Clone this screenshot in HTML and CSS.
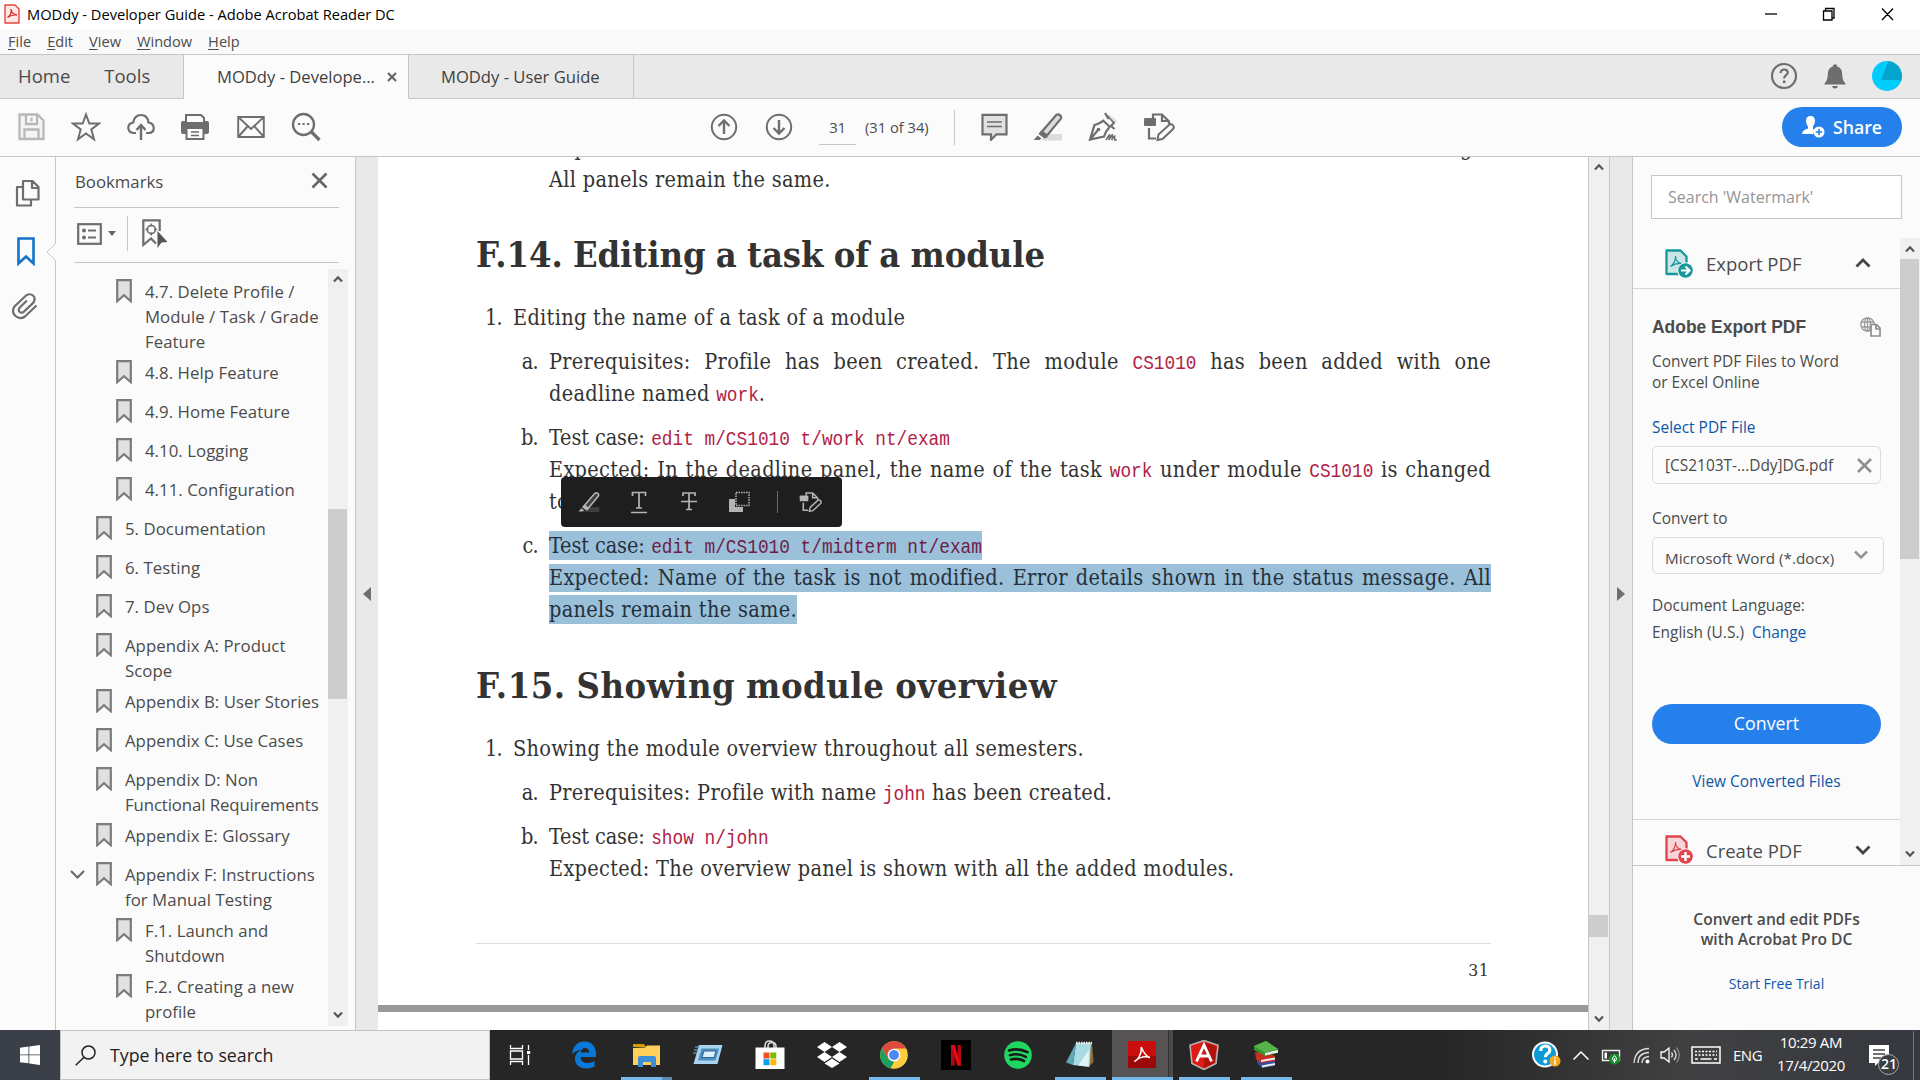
FILE: index.html
```html
<!DOCTYPE html>
<html lang="en">
<head>
<meta charset="utf-8">
<title>MODdy - Developer Guide - Adobe Acrobat Reader DC</title>
<link rel="stylesheet" href="styles.css">
</head>
<body>
<svg class="defs" width="0" height="0" aria-hidden="true">
  <symbol id="bm" viewBox="0 0 16 24"><path d="M1.2 1.2h13.6v21L8 16.2l-6.800 6z" fill="#e1e1e1" stroke="#7b7b7b" stroke-width="2.2"/></symbol>
  <symbol id="up" viewBox="0 0 10 8"><path d="M1 6.500L5 2.300l4 4.200" fill="none" stroke="#555" stroke-width="2.200"/></symbol>
  <symbol id="down" viewBox="0 0 10 8"><path d="M1 1.500L5 5.700l4-4.200" fill="none" stroke="#555" stroke-width="2.200"/></symbol>
  <symbol id="pdf" viewBox="0 0 28 29"><path d="M1.500 1.500h14l6 6v17.500h-20z" fill="currentColor" fill-opacity=".2" stroke="currentColor" stroke-width="2.300" stroke-linejoin="round"/><path d="M5.500 17.500c2.500-1.500 5.500-6 5-10.500 0 4.500 3 7 6.500 7.500-4-.3-8 .5-11.500 3z" fill="none" stroke="currentColor" stroke-width="1.200"/><circle cx="20.500" cy="21.500" r="8.300" fill="#fbfbfb"/><circle cx="20.500" cy="21.500" r="7.300" fill="currentColor"/></symbol>
  <symbol id="edit" viewBox="0 0 32 30"><path d="M10 6V2.500h9l7 7V12M19 2.500V9h7M6 16v10.500h7" fill="none" stroke="currentColor" stroke-width="2.200"/><rect x="1" y="6" width="12" height="8" rx="1" fill="currentColor"/><path d="M14.500 28l1-5.500L26.500 12.500q2-1 3.500.8t.3 3.500L19.500 27z" fill="none" stroke="currentColor" stroke-width="2"/></symbol>
  <symbol id="marker" viewBox="0 0 30 30"><path d="M8 28.500L15 22h14v6.500z" fill="currentColor" opacity=".22"/><path d="M9 19.500L23 3.200q2-1.700 4 0t.5 4L14 23.500z" fill="currentColor" fill-opacity=".22" stroke="currentColor" stroke-width="2.200"/><path d="M7.500 19l7.500 6-3.500 1.500-6-4.500zM4.500 23.500l4 3-2 1.500H.8z" fill="currentColor"/></symbol>
</svg>

<header class="titlebar">
  <svg class="app-icon" viewBox="0 0 16 20"><path d="M1 1h10l4 4v14H1z" fill="#ffe9e7" stroke="#e8433d" stroke-width="1.400" stroke-linejoin="round"/><path d="M3.500 13.500c2.500-1.500 4-5 3.500-8.500.5 4 3 5.500 6 6-4-.3-6.500.5-9.500 2.500z" fill="none" stroke="#d9312b" stroke-width="1.300"/></svg>
  <span class="title">MODdy - Developer Guide - Adobe Acrobat Reader DC</span>
  <svg class="win-buttons" viewBox="0 0 132 16"><path d="M1 8h12" stroke="#000" stroke-width="1.300"/><path d="M59.500 5h8.500v9h-8.500zM61.500 5V2.500H70V12h-2M118 2.500l11 11.500M129 2.500L118 14" fill="none" stroke="#000" stroke-width="1.300"/></svg>
</header>
<nav class="menubar"><span><u>F</u>ile</span><span><u>E</u>dit</span><span><u>V</u>iew</span><span><u>W</u>indow</span><span><u>H</u>elp</span></nav>

<div class="tabs">
  <div class="home-tabs"><span class="home">Home</span><span>Tools</span></div>
  <div class="tab active"><span>MODdy - Develope...</span><svg width="10" height="10" viewBox="0 0 10 10"><path d="M1 1l8 8M9 1L1 9" stroke="#666" stroke-width="2.200"/></svg></div>
  <div class="tab"><span>MODdy - User Guide</span></div>
  <div class="account">
    <svg width="28" height="28" viewBox="0 0 28 28"><circle cx="14" cy="14" r="12" fill="none" stroke="#6e6e6e" stroke-width="2.200"/><path d="M10.700 11q0-3.500 3.500-3.500t3.500 3q0 1.500-1.600 2.600T14.200 16v.5" fill="none" stroke="#6e6e6e" stroke-width="2.200"/><circle cx="14.200" cy="19.800" r="1.500" fill="#6e6e6e"/></svg>
    <svg width="22" height="25" viewBox="0 0 22 25"><path d="M11 .3q2 0 2.200 2.200 5 1.500 5 7.500 0 6.500 3.300 9.500v1H.5v-1Q3.800 16.500 3.800 10q0-6 5-7.500Q9 .3 11 .3zM8 22h6q-.5 2.500-3 2.500T8 22z" fill="#6e6e6e"/></svg>
    <svg width="30" height="30" viewBox="0 0 30 30"><circle cx="15" cy="15" r="15" fill="#00ccfb"/><path d="M16.500 0Q28 2 30 14q0 4-1 6.500L27 19H9z" fill="#00a4cc"/></svg>
  </div>
</div>

<div class="toolbar">
  <div class="file-tools">
    <svg width="27" height="28" viewBox="0 0 27 28"><path d="M1.500 1.500h18l6 6V26h-24zM8 1.500V11h11V2M13.500 4.500v4M6.500 26V16.500h14V26" fill="#eee" fill-opacity=".5" stroke="#b8b8b8" stroke-width="2.300"/></svg>
    <svg width="30" height="30" viewBox="0 0 30 30"><path d="M15 2.500l3.300 9h9.700l-7.700 6 2.700 9.700-8-5.700-8 5.700 2.700-9.700-7.700-6h9.700z" fill="none" stroke="#6e6e6e" stroke-width="2"/></svg>
    <svg width="28" height="28" viewBox="0 0 28 28"><path d="M9 20H6.500Q1.500 19.500 1.300 15t5-5.500Q7.500 2 14 2t7.500 7.500q5 .8 5.200 5.500t-5 5H19" fill="none" stroke="#6e6e6e" stroke-width="2.200"/><path d="M14 27V12.500M9.500 17l4.500-5 4.500 5" fill="none" stroke="#6e6e6e" stroke-width="2.400"/></svg>
    <svg width="28" height="28" viewBox="0 0 28 28"><path d="M0 10q0-2 2-2h24q2 0 2 2v9q0 2-2 2H2q-2 0-2-2z" fill="#6e6e6e"/><path d="M5 9V2h15l3 3v4" fill="#fbfbfb" stroke="#6e6e6e" stroke-width="2"/><rect x="5.500" y="15" width="17" height="11" fill="#fbfbfb" stroke="#6e6e6e" stroke-width="2"/><path d="M10 19h8M10 22.500h8" stroke="#6e6e6e" stroke-width="1.500"/></svg>
    <svg class="mail" width="28" height="24" viewBox="0 0 28 24"><path d="M1.200 2h25.600v20H1.200zM1.500 2.300L14 14 26.500 2.300M1.500 21.500l9-10M26.500 21.500l-9-10" fill="none" stroke="#6e6e6e" stroke-width="1.900"/></svg>
    <svg width="30" height="30" viewBox="0 0 30 30"><circle cx="12.500" cy="12.500" r="10.500" fill="none" stroke="#6e6e6e" stroke-width="2.300"/><path d="M20 19.500l8.500 8.500" stroke="#6e6e6e" stroke-width="3.200"/><path d="M7 12h2.200M11.500 12h2.200M16 12h2.200" stroke="#6e6e6e" stroke-width="2.200"/></svg>
  </div>
  <div class="page-tools">
    <svg width="28" height="28" viewBox="0 0 28 28"><path d="M14 21V8M8.500 13L14 7.500l5.500 5.500" fill="none" stroke="#6e6e6e" stroke-width="2.400"/><circle cx="14" cy="14" r="12.200" fill="none" stroke="#6e6e6e" stroke-width="2"/></svg>
    <svg width="28" height="28" viewBox="0 0 28 28"><path d="M14 7v13M8.500 15l5.500 5.500 5.500-5.500" fill="none" stroke="#6e6e6e" stroke-width="2.400"/><circle cx="14" cy="14" r="12.200" fill="none" stroke="#6e6e6e" stroke-width="2"/></svg>
    <span class="page-input">31</span><span class="page-count">(31 of 34)</span><i class="divider"></i>
  </div>
  <div class="edit-tools">
    <svg width="27" height="28" viewBox="0 0 27 28"><path d="M1.500 1.800h24v19.500H15.500l-5.500 5.500v-5.500H1.500z" fill="#e1e1e1" stroke="#6e6e6e" stroke-width="2.200"/><path d="M6 9h15M6 13.500h15" stroke="#6e6e6e" stroke-width="1.500"/></svg>
    <svg width="30" height="30"><use href="#marker"/></svg>
    <svg width="30" height="30" viewBox="0 0 30 30"><path d="M19 4l7 8 3-3-8-7z" fill="#ddd"/><path d="M17 1l3.500 6M26.500 10l-3.500 4 3.500 3M14.500 8l8 7.500M16 8q-3 3-9.500 5L2 27.500l14-3q1.500-5 5.500-9.500M2.500 27L10 18" fill="none" stroke="#6e6e6e" stroke-width="2.200"/><path d="M17.500 2l8.500 9" stroke="#6e6e6e" stroke-width="1.500"/><circle cx="10.500" cy="17.500" r="1.800" fill="#6e6e6e"/><path d="M18 28q3.500-6 3.700-5t-1 5q3.500-6 3.800-5t-.8 5q2.500-4 3-4v4h2" fill="none" stroke="#6e6e6e" stroke-width="1.500"/></svg>
    <svg width="32" height="30"><use href="#edit"/></svg>
  </div>
  <div class="share"><svg width="23" height="22" viewBox="0 0 23 22"><path d="M8.500 0q4.500 0 4.500 5 0 3-2 5.500V13l2 1q-2 2-1.500 4H0q0-4 6-5.500v-2Q4 8 4 5q0-5 4.500-5z" fill="#fff"/><circle cx="17" cy="16" r="5.500" fill="#fff"/><path d="M17 12.800v6.400M13.800 16h6.400" stroke="#2680eb" stroke-width="1.500"/></svg><span>Share</span></div>
</div>

<main class="workspace">
  <aside class="rail">
    <svg width="25" height="29" viewBox="0 0 25 29"><path d="M8 2h9.500l6 6v12.500H8zM17 2v7h6.500M8 8H2v18.500h14V21" fill="none" stroke="#6e6e6e" stroke-width="2.200" stroke-linejoin="round"/></svg>
    <svg class="mark-icon" width="18" height="29" viewBox="0 0 18 29"><path d="M1.500 1.500h15v25L9 19.500l-7.500 7z" fill="none" stroke="#1473c9" stroke-width="2.600"/></svg>
    <svg class="clip" width="26" height="28" viewBox="0 0 26 28"><path d="M24.500 13.500L13 24.500q-5 3.500-9.500-.5t-1-9.500L14 3.500q4-2.500 7 0t.5 7L11.500 20q-2.500 1.500-4-.2t0-4L15 8.500" fill="none" stroke="#6e6e6e" stroke-width="2.200"/></svg>
    <svg class="notch" width="10" height="18" viewBox="0 0 10 18"><path d="M10 0L1 9l9 9" fill="#fbfbfb" stroke="#c6c6c6"/></svg>
  </aside>
  <aside class="bookmarks">
    <div class="bm-head"><span>Bookmarks</span><svg width="17" height="17" viewBox="0 0 17 17"><path d="M1.500 1.500l14 14M15.500 1.500l-14 14" stroke="#666" stroke-width="2.600"/></svg></div>
    <div class="bm-tools">
      <svg width="25" height="22" viewBox="0 0 25 22"><rect x="1.200" y="1.200" width="22.600" height="19.600" fill="none" stroke="#6e6e6e" stroke-width="2.200"/><circle cx="7" cy="7.500" r="2" fill="#6e6e6e"/><circle cx="7" cy="14.500" r="2" fill="#6e6e6e"/><path d="M11 7.500h8M11 14.500h8" stroke="#6e6e6e" stroke-width="2"/></svg>
      <svg class="caret" width="8" height="5" viewBox="0 0 8 5"><path d="M0 0h8L4 5z" fill="#666"/></svg>
      <i></i>
      <svg width="26" height="29" viewBox="0 0 26 29"><path d="M17.700 12V1.300H1.300V26L9 19.500l5 5" fill="none" stroke="#6e6e6e" stroke-width="2.200"/><circle cx="9.300" cy="10.500" r="4" fill="none" stroke="#6e6e6e" stroke-width="1.600"/><path d="M9.300 4.500v3M9.300 13.500v3M3.500 10.500h3M12 10.500h3" stroke="#6e6e6e" stroke-width="1.500"/><path d="M15.500 12l10 11-6 .5-4 5.500z" fill="#555"/></svg>
    </div>
    <div class="bm-body">
      <ul class="bm-list">
        <li class="sub"><svg><use href="#bm"/></svg><span>4.7. Delete Profile /<br>Module / Task / Grade<br>Feature</span></li>
        <li class="sub"><svg><use href="#bm"/></svg><span>4.8. Help Feature</span></li>
        <li class="sub"><svg><use href="#bm"/></svg><span>4.9. Home Feature</span></li>
        <li class="sub"><svg><use href="#bm"/></svg><span>4.10. Logging</span></li>
        <li class="sub"><svg><use href="#bm"/></svg><span>4.11. Configuration</span></li>
        <li><svg><use href="#bm"/></svg><span>5. Documentation</span></li>
        <li><svg><use href="#bm"/></svg><span>6. Testing</span></li>
        <li><svg><use href="#bm"/></svg><span>7. Dev Ops</span></li>
        <li><svg><use href="#bm"/></svg><span>Appendix A: Product<br>Scope</span></li>
        <li><svg><use href="#bm"/></svg><span>Appendix B: User Stories</span></li>
        <li><svg><use href="#bm"/></svg><span>Appendix C: Use Cases</span></li>
        <li><svg><use href="#bm"/></svg><span>Appendix D: Non<br><span class="tight">Functional Requirements</span></span></li>
        <li><svg><use href="#bm"/></svg><span>Appendix E: Glossary</span></li>
        <li class="open"><svg class="chev" viewBox="0 0 15 9"><path d="M1 1l6.500 6.500L14 1" fill="none" stroke="#666" stroke-width="2"/></svg><svg><use href="#bm"/></svg><span>Appendix F: Instructions<br>for Manual Testing</span></li>
        <li class="sub"><svg><use href="#bm"/></svg><span>F.1. Launch and<br>Shutdown</span></li>
        <li class="sub"><svg><use href="#bm"/></svg><span>F.2. Creating a new<br>profile</span></li>
      </ul>
      <div class="scroll bm-scroll"><svg><use href="#up"/></svg><div class="thumb"></div><svg class="end"><use href="#down"/></svg></div>
    </div>
  </aside>
  <div class="strip left"><svg width="8" height="14" viewBox="0 0 8 14"><path d="M8 0v14L0 7z" fill="#6e6e6e"/></svg></div>

  <section class="document">
    <article class="page">
      <p class="line cut"><span>Expected:</span><span>message.</span></p>
      <p class="line l2">All panels remain the same.</p>
      <h2 class="h14">F.14. Editing a task of a module</h2>
      <div class="item one"><b>1.</b><p>Editing the name of a task of a module</p></div>
      <div class="item"><b>a.</b><p><span class="just">Prerequisites: Profile has been created. The module <code>CS1010</code> has been added with one</span>deadline named <code>work</code>.</p></div>
      <div class="item"><b>b.</b><p><span class="case">Test case:</span> <code>edit m/CS1010 t/work nt/exam</code><span class="just">Expected: In the deadline panel, the name of the task <code>work</code> under module <code>CS1010</code> is changed</span>to <code>exam</code>.</p></div>
      <div class="item"><b>c.</b><p><mark><span class="case">Test case:</span> <code>edit m/CS1010 t/midterm nt/exam</code></mark><span class="just sel">Expected: Name of the task is not modified. Error details shown in the status message. All</span><mark>panels remain the same.</mark></p></div>
      <h2 class="h15">F.15. Showing module overview</h2>
      <div class="item one"><b>1.</b><p>Showing the module overview throughout all semesters.</p></div>
      <div class="item"><b>a.</b><p>Prerequisites: Profile with name <code>john</code> has been created.</p></div>
      <div class="item"><b>b.</b><p><span class="case">Test case:</span> <code>show n/john</code><br>Expected: The overview panel is shown with all the added modules.</p></div>
      <footer>31</footer>
    </article>
    <div class="page-gap"></div>
    <div class="popup">
      <svg width="22" height="24"><use href="#marker"/></svg>
      <svg width="16" height="24" viewBox="0 0 16 24"><path d="M1.500 6V2.500h13V6M8 2.500V18M5 18h6M0 22.500h16" fill="none" stroke="#b4b4b4" stroke-width="1.700"/></svg>
      <svg width="16" height="24" viewBox="0 0 16 24"><path d="M2 6V3h12v3M8 3v16M5 19.500h6M0 11.500h16" fill="none" stroke="#b4b4b4" stroke-width="1.700"/></svg>
      <svg width="21" height="22" viewBox="0 0 21 22"><path d="M0 8h6v8h8v5H0z" fill="#b4b4b4"/><rect x="7" y="1.500" width="13" height="13" fill="none" stroke="#b4b4b4" stroke-width="1.500" stroke-dasharray="1.500 1"/></svg>
      <i></i>
      <svg width="23" height="24"><use href="#edit"/></svg>
    </div>
  </section>
  <div class="scroll doc-scroll"><svg><use href="#up"/></svg><div class="thumb"></div><svg class="end"><use href="#down"/></svg></div>
  <div class="strip right"><svg width="8" height="14" viewBox="0 0 8 14"><path d="M0 0v14l8-7z" fill="#6e6e6e"/></svg></div>

  <aside class="tools">
    <div class="search">Search 'Watermark'</div>
    <div class="tools-scroll">
      <div class="tools-list">
        <div class="tool-head"><svg class="teal" width="28" height="29"><use href="#pdf"/><path d="M16 21.500h7M20.500 17.500l4 4-4 4" fill="none" stroke="#fff" stroke-width="2.200"/></svg><span>Export PDF</span><svg width="16" height="10" viewBox="0 0 16 10"><path d="M1.500 8.500L8 2l6.500 6.500" fill="none" stroke="#444" stroke-width="2.800"/></svg></div>
        <div class="tool-body">
          <div class="export-title"><strong>Adobe Export PDF</strong><svg width="21" height="20" viewBox="0 0 21 20"><g fill="none" stroke="#999" stroke-width="1.300"><circle cx="7.500" cy="7.500" r="6.700"/><ellipse cx="7.500" cy="7.500" rx="3" ry="6.700"/><path d="M1 5h13M1 10h13M7.500 1v13"/></g><path d="M11 7.500h5.500l3.500 3.500v8h-9zM16 7.500V12h4" fill="#fbfbfb" stroke="#8e8e8e" stroke-width="1.700"/></svg></div>
          <p class="desc">Convert PDF Files to Word<br>or Excel Online</p>
          <a class="select">Select PDF File</a>
          <div class="field file"><span>[CS2103T-...Ddy]DG.pdf</span><svg width="15" height="15" viewBox="0 0 15 15"><path d="M1 1l13 13M14 1L1 14" stroke="#8e8e8e" stroke-width="2.500"/></svg></div>
          <p class="to">Convert to</p>
          <div class="field format"><span>Microsoft Word (*.docx)</span><svg width="14" height="9" viewBox="0 0 14 9"><path d="M1 1.500l6 6 6-6" fill="none" stroke="#949494" stroke-width="2.500"/></svg></div>
          <p class="lang">Document Language:</p>
          <p class="lang2">English (U.S.)<a>Change</a></p>
          <div class="convert">Convert</div>
          <a class="view">View Converted Files</a>
        </div>
        <div class="tool-head create"><svg class="red" width="28" height="29"><use href="#pdf"/><path d="M16 21.500h9M20.500 17v9" stroke="#fff" stroke-width="2.500"/></svg><span>Create PDF</span><svg width="16" height="10" viewBox="0 0 16 10"><path d="M1.500 1.500L8 8l6.500-6.500" fill="none" stroke="#444" stroke-width="2.800"/></svg></div>
      </div>
      <div class="scroll tools-bar"><svg><use href="#up"/></svg><div class="thumb"></div><svg class="end"><use href="#down"/></svg></div>
    </div>
    <div class="promo"><strong>Convert and edit PDFs<br>with Acrobat Pro DC</strong><a>Start Free Trial</a></div>
  </aside>
</main>

<footer class="taskbar">
  <div class="start"><svg width="20" height="20" viewBox="0 0 20 20"><path d="M0 2.800L8.500 1.500v8H0zM9.300 1.400L20 0v9.500H9.300zM0 10.300h8.500v8L0 17.200zM9.300 10.300H20V20L9.300 18.400z" fill="#fff"/></svg></div>
  <div class="find"><svg width="21" height="21" viewBox="0 0 21 21"><circle cx="13.500" cy="7.500" r="6.500" fill="none" stroke="#222" stroke-width="1.500"/><path d="M9 12.200L.7 20.300" stroke="#222" stroke-width="1.500"/></svg><span>Type here to search</span></div>
  <div class="apps">
    <div class="app"><svg width="22" height="20" viewBox="0 0 22 20"><path d="M1.500 0v3.500h12V0M1.500 6h12v8h-12zM1.500 20v-3.500h12V20M19.500 0v5M19.500 10v10" fill="none" stroke="#fff" stroke-width="1.300"/><path d="M18 6h3.200v3H18z" fill="#fff"/></svg></div>
    <div class="app"><svg width="26" height="28" viewBox="0 0 26 28"><path d="M1 13C2 5 7 .5 13.500.5 20 .5 25 5 25 12.500V16H9.500c.3 4 3 6 7 6 2.800 0 5.500-1 7-2v5.500c-2 1.300-5 2-8 2C8.500 27.500 4 23.500 4 18c0-4.500 2.500-7.500 6.500-9-3.500.2-7 1.500-9.500 4zm8.800-1.500h8.400C18 8.500 16.500 7 14 7s-4 2-4.200 4.500z" fill="#0a78d7"/></svg></div>
    <div class="app run more"><svg width="29" height="24" viewBox="0 0 29 24"><path d="M1 1h11l2 3H1z" fill="#d99a00"/><path d="M1 5l12-.5L15 2.500h13V22H1z" fill="#ffd05a"/><path d="M6 24V15q0-2 2-2h14q2 0 2 2v9h-5v-5h-8v5z" fill="#3b8fd9"/></svg></div>
    <div class="app"><svg width="30" height="22" viewBox="0 0 30 22"><path d="M6 1h23.500l-5 19H0.500z" fill="#a9d3ef"/><path d="M8.500 4.500h17.500l-3.500 12H5z" fill="#4d8fbf"/><path d="M11 7h12l-2 6.500H9z" fill="#d9effc" stroke="#2f6790"/><path d="M2 3h5M1 6h5M0 9h5" stroke="#81b7dc"/></svg></div>
    <div class="app"><svg width="30" height="30" viewBox="0 0 30 30"><path d="M10 8V6q0-5 4.500-5T19 6v2M13 8V6.500q0-4 4-4t4 4V8" fill="none" stroke="#ddd" stroke-width="1.500"/><path d="M.5 7.500h29V29H.5z" fill="#fff"/><path d="M8.500 12.500h6v6h-6z" fill="#f25022"/><path d="M15.300 12.500h6v6h-6z" fill="#7fba00"/><path d="M8.500 19.200h6v6h-6z" fill="#00a4ef"/><path d="M15.300 19.200h6v6h-6z" fill="#ffb900"/></svg></div>
    <div class="app"><svg width="30" height="26" viewBox="0 0 30 26"><path d="M7.500 0L15 5 7.500 10 0 5zM22.500 0L30 5l-7.500 5L15 5zM7.500 10L15 15l-7.500 5L0 15zM22.500 10l7.500 5-7.500 5-7.500-5zM15 16.500l7.500 5L15 26l-7.500-4.500z" fill="#fff"/></svg></div>
    <div class="app run"><svg width="28" height="28" viewBox="0 0 28 28"><circle cx="14" cy="14" r="13.800" fill="#ffcd42"/><path d="M14 14L8 17.500 2 7.200A13.800 13.800 0 0 1 26 7.500H14z" fill="#dd4b3e"/><path d="M2 7.200l6 10.300 6 3.500-3.500 6.500A13.800 13.800 0 0 1 2 7.200z" fill="#1aa160"/><circle cx="14" cy="14" r="6.300" fill="#fff"/><circle cx="14" cy="14" r="5" fill="#4c8bf5"/></svg></div>
    <div class="app"><svg width="30" height="30" viewBox="0 0 30 30"><path d="M0 0h30v30H0z" fill="#000"/><path d="M10 5h3.700v20.300l-3.700.4zM16.500 5H20v20.700l-3.500-.4z" fill="#b20710"/><path d="M10 5h3.700L20 25.700l-3.700-.4z" fill="#e50914"/></svg></div>
    <div class="app"><svg width="28" height="28" viewBox="0 0 28 28"><circle cx="14" cy="14" r="13.800" fill="#1ed760"/><path d="M5 9.500q10-3 18.500 1.700M6 14.200q8-2.400 15.800 1.700M7 18.500q7-1.800 13 1.500" fill="none" stroke="#191919" stroke-width="2.600" stroke-linecap="round"/></svg></div>
    <div class="app run"><svg width="28" height="27" viewBox="0 0 28 27"><path d="M12 2l14-1 1.500 20-3.500 3.500z" fill="#8c6d3c"/><path d="M10 2h15l-1.500 24L7 24z" fill="#a8dbe4"/><path d="M10 2L7 24l-7-2.500z" fill="#5fa9b8"/><path d="M10 2h16" stroke="#eee" stroke-width="2.500" stroke-dasharray="1.500 1"/><path d="M20 13l3-4-.5 16.500-10-1z" fill="#dff3f5"/></svg></div>
    <div class="app run current"><svg width="28" height="27" viewBox="0 0 28 27"><path d="M0 0h28v27H0z" fill="#c90d0d"/><path d="M0 15h28v12H0z" fill="#9c0909"/><path d="M6.500 20.500c4-2 7.500-8.500 6.700-14.500 2.500 6 5 9.500 8.800 10.500-5-1.500-11 0-15.500 4z" fill="none" stroke="#fff" stroke-width="1.500"/></svg></div>
    <div class="app run"><svg width="30" height="30" viewBox="0 0 30 30"><path d="M15 .5l14 4.800L27 23.500 15 29.500 3 23.500 1 5.300z" fill="#dd1b16" stroke="#b3b3b3" stroke-width="1.600"/><path d="M15 2l12.500 4.300L25.500 22.500 15 28z" fill="#b0120d"/><path d="M7.500 21.500L15 5l7.500 16.500M11 16h8" fill="none" stroke="#fff" stroke-width="2.800"/></svg></div>
    <div class="app run"><svg width="26" height="27" viewBox="0 0 26 27"><path d="M4 18l13-1 5 3v5L9 27l-5-5z" fill="#2f4fa2"/><path d="M9 24.500l13-2.500v2L9 26.500z" fill="#eee"/><path d="M2 11l14 1 6 3v5L8 22l-5-4z" fill="#c62e22"/><path d="M8 19l14-2.500v2L8 21z" fill="#eee"/><path d="M1 5l12-5 12 8v4L12 15 1 9z" fill="#39952e"/><path d="M1 5l12-5 12 8-13 3.500z" fill="#58b44a"/><path d="M12 12l13-3v2.500l-13 3z" fill="#eee"/></svg></div>
  </div>
  <div class="tray">
    <svg class="t1" width="29" height="28" viewBox="0 0 29 28"><circle cx="13" cy="13.500" r="12" fill="#0c9bd8" stroke="#fff" stroke-width="2"/><path d="M8.700 10q0-5 4.600-5t4.500 4.200q0 2-2.300 3.500t-2.200 3.500" fill="none" stroke="#fff" stroke-width="3.200"/><circle cx="13.300" cy="20.500" r="2" fill="#fff"/><circle cx="23" cy="20" r="5.500" fill="#f5a81c"/><path d="M23 18.700v5M23 16v1.600" stroke="#fff" stroke-width="1.600"/></svg>
    <svg class="t2" width="16" height="9" viewBox="0 0 16 9"><path d="M.5 8.500L8 1l7.500 7.500" fill="none" stroke="#fff" stroke-width="1.500"/></svg>
    <svg class="t3" width="20" height="16" viewBox="0 0 20 16"><path d="M1.500 1.500h17v10h-17z" fill="none" stroke="#eee" stroke-width="1.400"/><path d="M3.500 3.500H6v6H3.500z" fill="#fff"/><circle cx="13.500" cy="10" r="5.500" fill="#11912a"/><path d="M13.500 6.500q4 4 0 6-4-2 0-6zM13.500 9v5" fill="none" stroke="#fff"/></svg>
    <svg class="t4" width="18" height="17" viewBox="0 0 18 17"><g fill="none" stroke="#ddd" stroke-width="1.300"><path d="M1 16Q2 2 16 1.500M5 16Q5 6 16 5.500M9 16q0-6 7-6.500"/></g><circle cx="14.500" cy="14.500" r="2" fill="#fff"/></svg>
    <svg class="t5" width="21" height="18" viewBox="0 0 21 18"><path d="M1 6h3l5-4v14l-5-4H1z" fill="none" stroke="#fff" stroke-width="1.300"/><path d="M11.500 6.500q2 2.500 0 5M14 4q4 5 0 10" fill="none" stroke="#ddd" stroke-width="1.300"/><path d="M16.500 1.500q5.500 7.500 0 15" fill="none" stroke="#888" stroke-width="1.300"/></svg>
    <svg class="t6" width="30" height="18" viewBox="0 0 30 18"><path d="M1 1h28v16H1z" fill="none" stroke="#fff" stroke-width="1.500"/><path d="M4 5.500h22M4 9h22" stroke="#fff" stroke-width="1.500" stroke-dasharray="2 1.500"/><path d="M4 13h3M9.500 13h11M23 13h3" stroke="#fff" stroke-width="1.500"/></svg>
    <span class="eng">ENG</span>
    <div class="clock">10:29 AM<br>17/4/2020</div>
    <div class="note"><svg width="31" height="30" viewBox="0 0 31 30"><path d="M0 0h20v18H9l-3 3v-3H0z" fill="#fff"/><path d="M4 5h12M4 9h12M4 13h8" stroke="#444" stroke-width="1.300"/><circle cx="19.500" cy="19.500" r="10" fill="#3a3d42" stroke="#aaa" stroke-width="1"/></svg><span>21</span></div>
  </div>
</footer>
</body>
</html>
```
FILE: styles.css
```css
* { box-sizing: border-box; }
body { margin: 0; width: 1920px; height: 1080px; overflow: hidden; display: flex; flex-direction: column; background: #fbfbfb; color: #4b4b4b; font-family: "Open Sans", "Noto Sans", sans-serif; }
p, h2, ul { margin: 0; padding: 0; }
svg { flex: none; display: block; }
.defs { position: absolute; }
a { color: #0d57a9; }

.titlebar { height: 29px; background: #fff; display: flex; align-items: center; padding-left: 4px; color: #000; }
.app-icon { width: 16px; height: 20px; margin-top: -2px; }
.title { margin-left: 7px; font-size: 14.650px; line-height: 29px; flex: 1; }
.win-buttons { width: 132px; height: 16px; margin-right: 24px; margin-top: -2px; }
.menubar { height: 26px; border-bottom: 1px solid #c6c6c6; background: #fafafa; display: flex; gap: 16px; padding-left: 8px; font-size: 14.600px; line-height: 25px; }
.menubar u { text-underline-offset: 2px; }

.tabs { height: 44px; background: #e9e9e9; display: flex; line-height: 42px; }
.home-tabs { width: 184px; border-right: 1px solid #c6c6c6; border-bottom: 1px solid #c6c6c6; padding-left: 18px; font-size: 18.500px; display: flex; gap: 34px; }
.tab { width: 225px; border-right: 1px solid #c6c6c6; border-bottom: 1px solid #c6c6c6; padding-left: 32px; font-size: 16.600px; color: #404040; display: flex; align-items: center; gap: 12px; }
.tab.active { background: #fbfbfb; border-bottom-color: #fbfbfb; padding-left: 33px; }
.account { flex: 1; border-bottom: 1px solid #c6c6c6; display: flex; align-items: center; justify-content: flex-end; gap: 26px; padding: 0 18px 1px 0; }

.toolbar { height: 58px; border-bottom: 1px solid #c6c6c6; display: flex; align-items: center; padding: 0 18px 1px 0; }
.file-tools { display: flex; align-items: center; gap: 26px; padding-left: 18px; width: 710px; }
.mail { margin-left: 2px; }
.page-tools { display: flex; align-items: center; gap: 27px; width: 271px; font-size: 14.700px; }
.page-input { width: 37px; height: 35px; line-height: 34px; border-bottom: 1px solid #c6c6c6; text-align: center; margin-left: -1px; font-size: 15px; letter-spacing: -.3px; }
.page-count { margin-left: -18px; width: 66px; white-space: nowrap; }
.divider { width: 1px; height: 35px; background: #c6c6c6; margin-left: -4px; }
.edit-tools { display: flex; align-items: center; gap: 25px; color: #6e6e6e; flex: 1; }
.share { width: 120px; height: 40px; border-radius: 20px; background: #2680eb; color: #fff; display: flex; align-items: center; padding-left: 20px; gap: 8px; font-size: 17.700px; font-weight: 600; }

.workspace { flex: 1; min-height: 0; display: flex; }
.rail { position: relative; width: 56px; border-right: 1px solid #c6c6c6; display: flex; flex-direction: column; align-items: center; gap: 29px; padding: 22px 0 0; }
.mark-icon { margin-right: 3px; }
.clip { margin: -3px 4px 0 0; }
.notch { position: absolute; right: -1px; top: 86px; }
.bookmarks { width: 300px; border-right: 1px solid #c6c6c6; display: flex; flex-direction: column; font-size: 16.800px; }
.bm-head { height: 51px; margin: 0 16px 0 18px; padding: 0 11px 2px 1px; border-bottom: 1px solid #c6c6c6; display: flex; justify-content: space-between; align-items: center; }
.bm-head svg { margin-top: -2px; }
.bm-tools { height: 55px; margin: 0 16px 0 18px; padding: 0 0 3px 3px; border-bottom: 1px solid #c6c6c6; display: flex; align-items: center; }
.bm-tools .caret { margin: 0 11px 0 6px; }
.bm-tools i { width: 1px; height: 35px; background: #c6c6c6; margin-right: 14px; }
.bm-body { display: flex; flex: 1; min-height: 0; padding: 6px 7px 4px 0; }
.bm-list { list-style: none; width: 272px; padding-top: 10px; overflow: hidden; line-height: 25px; white-space: nowrap; letter-spacing: .050px; }
.tight { letter-spacing: -.100px; }
.bm-list li { display: flex; align-items: flex-start; min-height: 39px; padding: 0 0 6px 40px; }
.bm-list li.sub { padding-left: 60px; }
.bm-list li.open { padding-left: 14px; }
.bm-list svg { width: 16px; height: 24px; margin-right: 13px; }
.bm-list .chev { width: 15px; height: 9px; margin: 8px 11px 0 0; }
.scroll { background: #f0f0f0; display: flex; flex-direction: column; align-items: center; flex: none; }
.scroll svg { width: 10px; height: 8px; }
.scroll .end { margin-top: auto; }
.thumb { background: #cdcdcd; width: 19px; align-self: flex-start; }
.bm-scroll { width: 20px; padding: 6px 0 7px; }
.bm-scroll .thumb { height: 190px; margin-top: 226px; }
.strip { background: #e9e9e9; display: flex; align-items: center; justify-content: center; }
.strip.left { width: 22px; }
.strip.right { width: 23px; border-right: 1px solid #c6c6c6; }

.document { position: relative; width: 1212px; background: #fff; overflow: hidden; border-right: 1px solid #c6c6c6; color: #333; font-family: "DejaVu Serif Condensed", "DejaVu Serif", serif; font-stretch: condensed; font-size: 21.500px; line-height: 32px; letter-spacing: .320px; }
.page { height: 848px; overflow: hidden; padding: 0 97px 0 98px; display: flex; flex-direction: column; }
.cut { display: flex; justify-content: space-between; margin-top: -25px; flex: none; }
.line { padding-left: 73px; }
h2 { font-size: 36px; line-height: 50px; font-weight: bold; letter-spacing: -.050px; word-spacing: -1px; white-space: nowrap; }
.h14 { margin-top: 33px; }
.h15 { margin-top: 34px; letter-spacing: .550px; }
.item { display: grid; grid-template-columns: 62px 1fr; column-gap: 11px; margin-top: 12.300px; white-space: nowrap; }
.item b { font-weight: normal; text-align: right; letter-spacing: -.800px; }
.item.one { grid-template-columns: 26px 1fr; margin-top: 22.500px; }
.case { letter-spacing: -.100px; }
.just { display: block; text-align: justify; text-align-last: justify; white-space: normal; height: 32px; }
code { font-family: "Liberation Mono", monospace; font-size: 17.800px; letter-spacing: 0; color: #b12146; display: inline-block; transform: translateY(-1px) scaleY(1.160); line-height: 20px; white-space: pre; }
mark { background: #9ac0da; color: #25303a; padding: 2px 0; }
.sel { background: linear-gradient(#9ac0da, #9ac0da) 0 2px / 100% 28px no-repeat; color: #25303a; }
mark code { color: #6f1c47; }
.page footer { margin-top: 58px; border-top: 1px solid #ddd; padding: 10px 2px 0 0; text-align: right; font-size: 17.500px; }
.page-gap { height: 7px; background: #999; }
.popup { position: absolute; left: 183px; top: 320px; width: 281px; height: 50px; border-radius: 4px; background: #1e1e1e; color: #b4b4b4; display: flex; align-items: center; padding-left: 17px; }
.popup svg:nth-child(2) { margin-left: 31px; }
.popup svg:nth-child(3) { margin-left: 34px; }
.popup svg:nth-child(4) { margin-left: 32px; }
.popup i { width: 1px; height: 22px; background: #6e6e6e; margin: 0 21px 0 27px; }
.doc-scroll { width: 21px; border-right: 1px solid #c6c6c6; padding: 6px 0 7px; }
.doc-scroll .thumb { height: 22px; margin-top: 744px; }

.tools { width: 287px; display: flex; flex-direction: column; font-size: 15.450px; }
.search { height: 44px; width: 251px; margin: 18px 0 19px 18px; border: 1px solid #c6c6c6; background: #fff; line-height: 43px; padding-left: 16px; color: #959595; font-size: 16px; }
.tools-scroll { height: 628px; display: flex; border-bottom: 1px solid #c6c6c6; }
.tools-list { width: 267px; overflow: hidden; }
.tools-bar { width: 20px; padding: 7px 0; }
.tools-bar .thumb { height: 300px; margin-top: 6px; }
.tool-head { height: 51px; border-bottom: 1px solid #d5d5d5; display: flex; align-items: center; padding-left: 32px; font-size: 18.500px; }
.tool-head span { width: 149px; margin-left: 13px; padding-top: 1px; }
.teal { color: #16989d; }
.red { color: #e2434d; }
.tool-head.create { height: 60px; border-bottom: 0; border-top: 1px solid #d5d5d5; }
.tool-body { padding-left: 19px; height: 530px; display: flex; flex-direction: column; white-space: nowrap; }
.export-title { display: flex; justify-content: space-between; width: 229px; margin-top: 27px; align-items: center; line-height: 22px; }
.export-title strong { font: bold 17.450px/22px "Liberation Sans", sans-serif; }
.desc { line-height: 21px; margin-top: 13px; }
.select { line-height: 22px; margin-top: 23px; }
.field { border: 1px solid #dcdcdc; border-radius: 5px; display: flex; align-items: center; justify-content: space-between; }
.file { width: 229px; height: 38px; margin-top: 8px; padding: 0 8px 0 12px; }
.to { line-height: 22px; margin-top: 23px; }
.format { width: 232px; height: 37px; margin-top: 8px; padding: 4px 15px 0 12px; font-size: 15.250px; }
.format svg { margin-top: -6px; }
.lang { line-height: 22px; margin-top: 20px; }
.lang2 { line-height: 22px; margin-top: 5px; }
.lang2 a { margin-left: 8px; }
.convert { width: 229px; height: 40px; border-radius: 20px; background: #2680eb; color: #fff; margin-top: 61px; text-align: center; font-size: 17.800px; line-height: 38px; }
.view { width: 229px; text-align: center; line-height: 22px; margin-top: 26px; }
.promo { text-align: center; line-height: 20px; padding-top: 43px; }
.promo strong { display: block; font-weight: 600; font-size: 15.600px; }
.promo a { display: block; margin-top: 25px; font-size: 14px; }

.taskbar { height: 50px; display: flex; background: linear-gradient(90deg, #262626 0 75%, #2c2c2c 78%, #414143 88%, #35383f 100%); color: #fff; }
.start { width: 60px; background: #3b3f48; display: flex; align-items: center; justify-content: center; }
.find { width: 430px; border: 1px solid #c4c4c4; background: #f2f2f2; display: flex; align-items: center; gap: 14px; padding-left: 14px; color: #222; font-size: 17.750px; }
.apps { display: flex; flex: none; width: 808px; margin-left: -1px; }
.app { width: 62px; display: flex; align-items: center; justify-content: center; border-bottom: 3px solid transparent; padding-top: 2px; position: relative; }
.app:first-child { margin-right: 2px; }
.app.run::after { content: ""; position: absolute; left: 6px; right: 5px; bottom: -3px; height: 3px; background: #76b9ed; }
.app.more::after { background: linear-gradient(90deg, #76b9ed 80%, #5b8cb3 80%); }
.app.current { background: linear-gradient(90deg, transparent 1px, #555354 1px 57px, #333 57px 58px, #4b494a 58px); }
.app.current::after { left: 1px; right: 0; }
.tray { flex: 1; display: flex; align-items: center; padding-left: 235px; font-size: 15px; }
.t2 { margin-left: 12px; }
.t3 { margin: 4px 0 0 12px; }
.t4 { margin-left: 12px; }
.t5 { margin-left: 9px; }
.t6 { margin-left: 10px; }
.eng { margin-left: 12px; letter-spacing: -.5px; width: 32px; }
.clock { width: 90px; margin-left: 1px; text-align: center; line-height: 23px; letter-spacing: -.350px; padding-bottom: 2px; }
.note { position: relative; margin: 9px 14px 0 13px; }
.note span { position: absolute; left: 12px; top: 9px; font-size: 14px; line-height: 20px; font-weight: 600; }
.note::after { content: ""; position: absolute; right: -14px; top: -14px; width: 1px; height: 52px; background: #777; }
```
